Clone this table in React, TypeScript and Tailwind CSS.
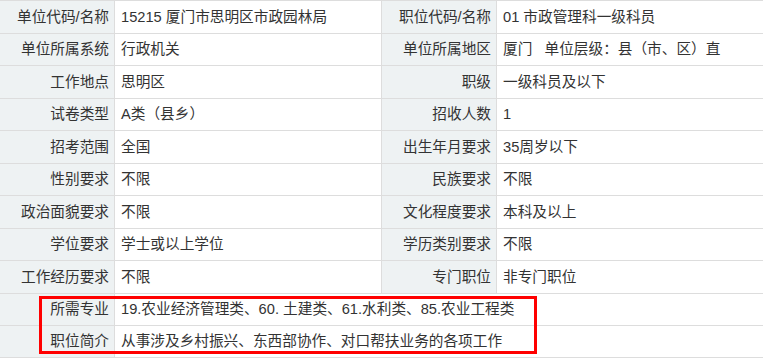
import React from "react"

type Row = [string, string, string?, string?]

const rows: Row[] = [
  ["单位代码/名称", "15215 厦门市思明区市政园林局", "职位代码/名称", "01 市政管理科一级科员"],
  ["单位所属系统", "行政机关", "单位所属地区", "厦门   单位层级：县（市、区）直"],
  ["工作地点", "思明区", "职级", "一级科员及以下"],
  ["试卷类型", "A类（县乡）", "招收人数", "1"],
  ["招考范围", "全国", "出生年月要求", "35周岁以下"],
  ["性别要求", "不限", "民族要求", "不限"],
  ["政治面貌要求", "不限", "文化程度要求", "本科及以上"],
  ["学位要求", "学士或以上学位", "学历类别要求", "不限"],
  ["工作经历要求", "不限", "专门职位", "非专门职位"],
  ["所需专业", "19.农业经济管理类、60. 土建类、61.水利类、85.农业工程类"],
  ["职位简介", "从事涉及乡村振兴、东西部协作、对口帮扶业务的各项工作"],
]

const labelCls =
  "flex h-[32.5px] items-center justify-end overflow-hidden whitespace-nowrap border-t border-r border-[#dddddd] bg-[#eef2f3] pr-[5px]"
const valueCls =
  "flex h-[32.5px] items-center overflow-hidden whitespace-pre border-t border-[#dddddd] bg-white pl-[6px]"

export default function App() {
  return (
    <div
      className="relative w-[763px] overflow-hidden bg-white text-[14.67px] text-[#333333]"
      style={{ fontFamily: '"Liberation Sans", "Noto Sans CJK SC", sans-serif' }}
    >
      <div className="grid grid-cols-[115px_267px_115px_266px]">
        {rows.map((r, i) => {
          const last = i === rows.length - 1 ? " border-b" : ""
          if (r.length === 2) {
            return (
              <React.Fragment key={i}>
                <div className={labelCls + last}>{r[0]}</div>
                <div className={valueCls + " col-span-3" + last}>{r[1]}</div>
              </React.Fragment>
            )
          }
          return (
            <React.Fragment key={i}>
              <div className={labelCls + last}>{r[0]}</div>
              <div className={valueCls + " border-r" + last}>{r[1]}</div>
              <div className={labelCls + last}>{r[2]}</div>
              <div className={valueCls + last}>{r[3]}</div>
            </React.Fragment>
          )
        })}
      </div>

      {/* red highlight box */}
      <div className="pointer-events-none absolute left-[39px] top-[296px] h-[58px] w-[498px] border-[3px] border-[#ff0000]" />
    </div>
  )
}
